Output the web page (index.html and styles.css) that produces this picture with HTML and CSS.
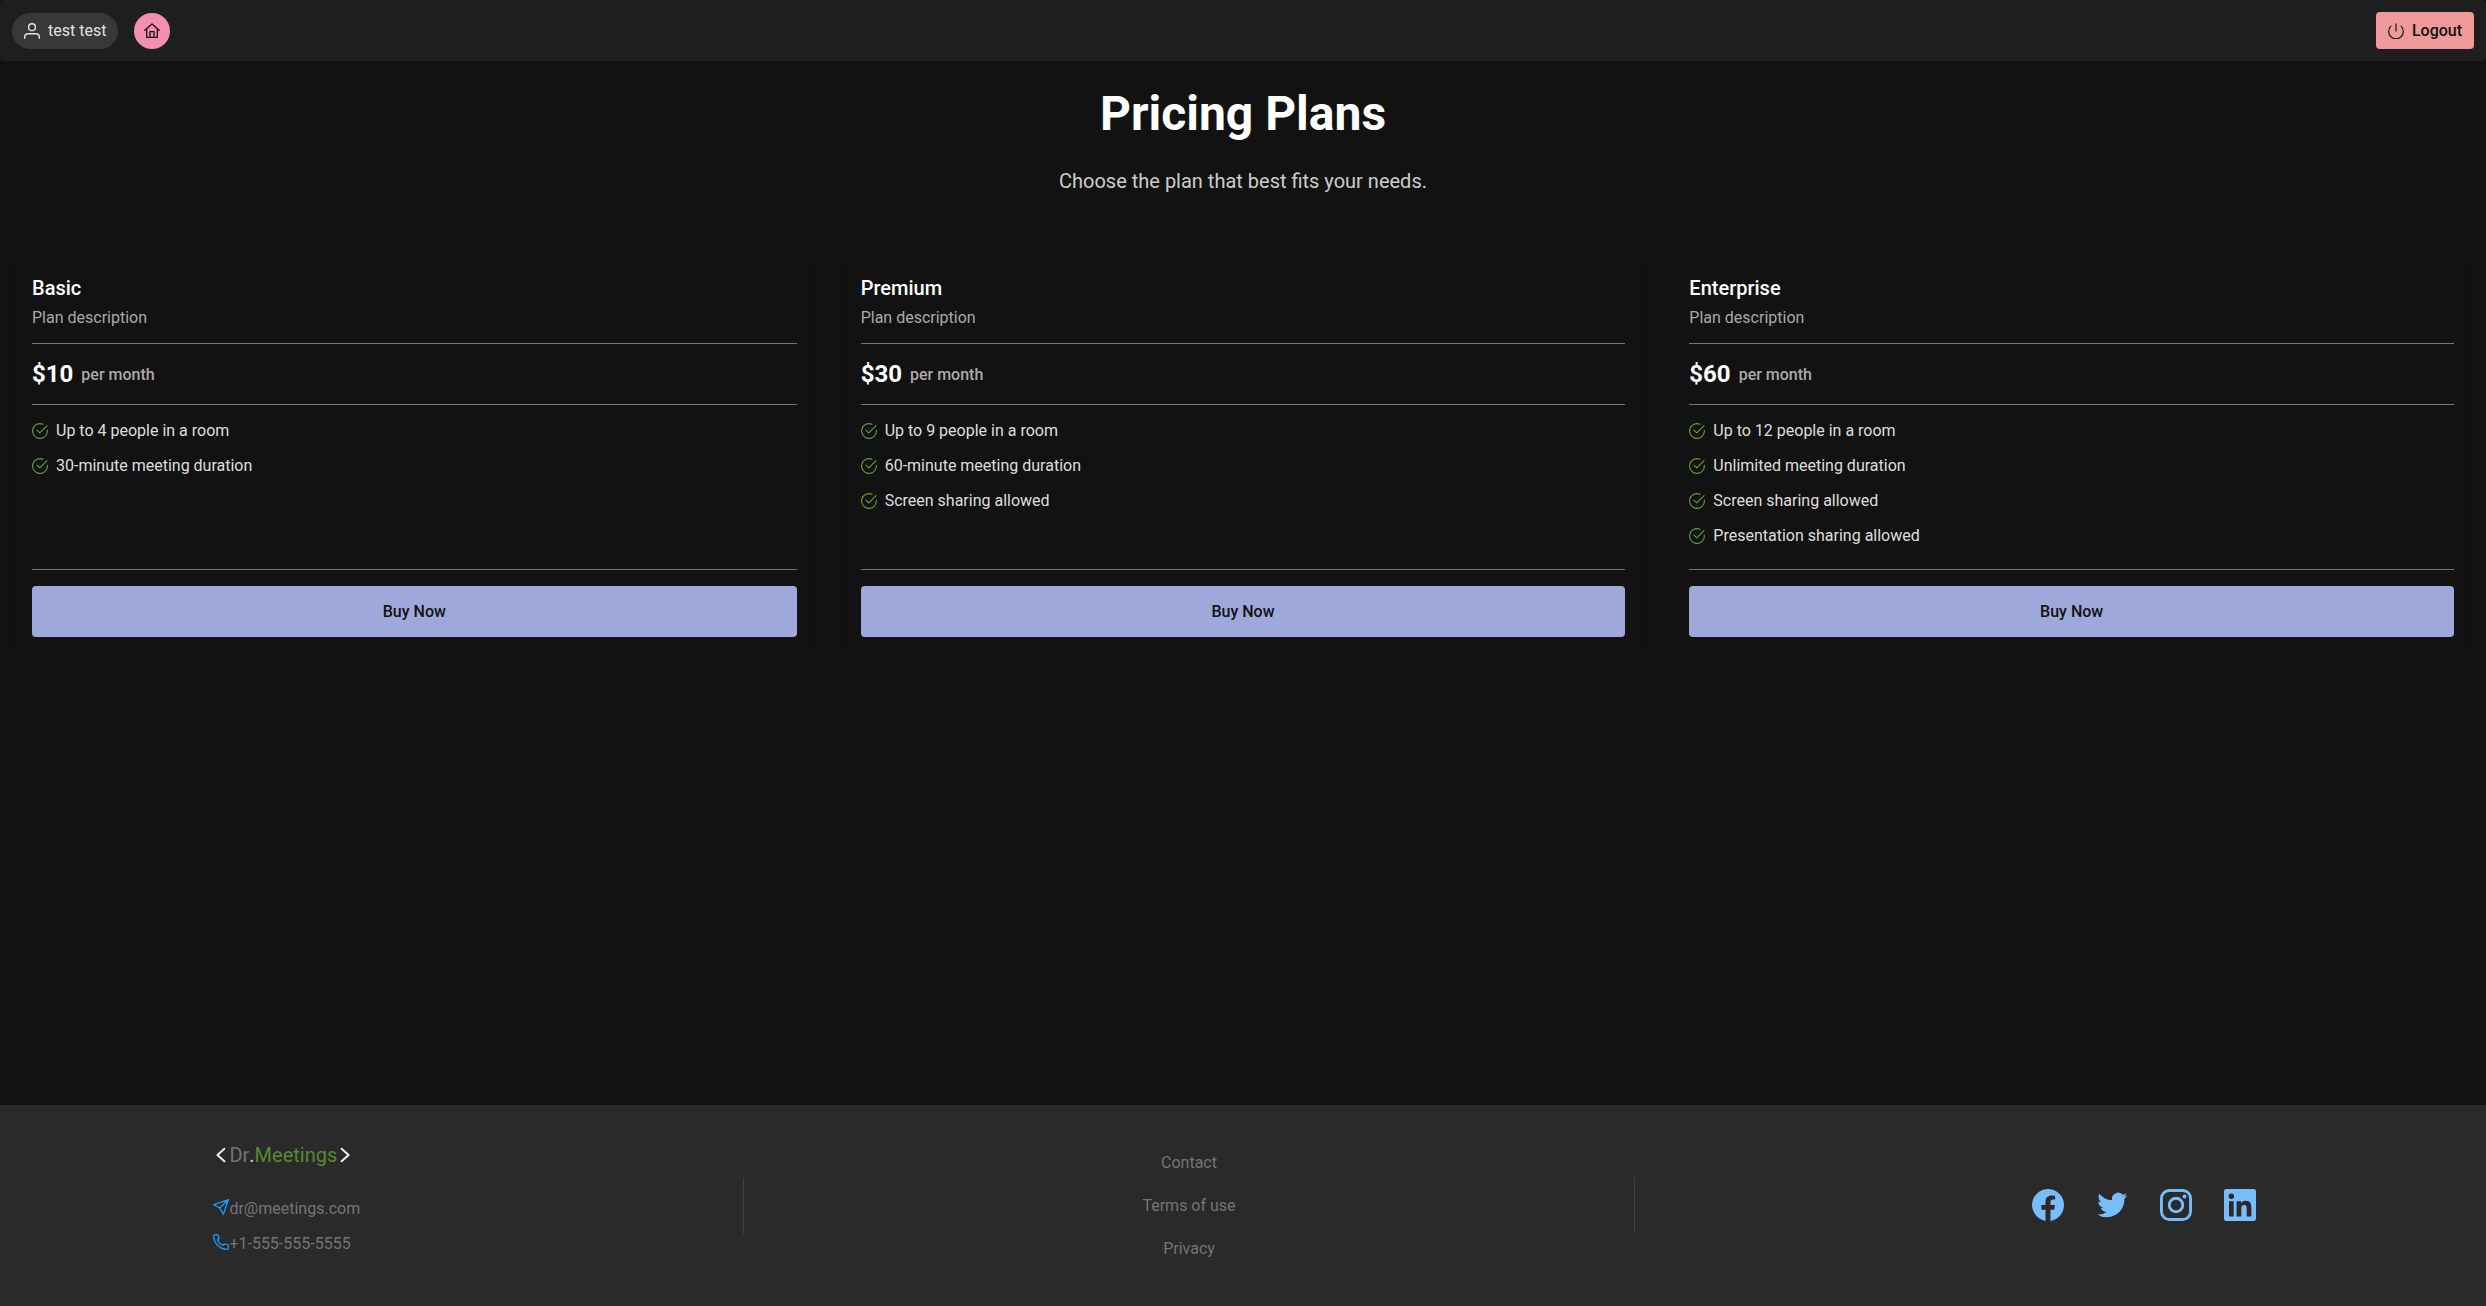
FILE: index.html
```html
<!DOCTYPE html>
<html lang="en">
<head>
<meta charset="utf-8">
<title>Pricing Plans</title>
<link rel="stylesheet" href="styles.css">
</head>
<body>
<svg class="sprite" aria-hidden="true">
  <symbol id="check" viewBox="0 0 16 16"><path d="M15.4 7.3V8A7.4 7.4 0 1 1 11 1.25M15 2.6 7.8 9.9 4.9 7.1" fill="none" stroke="currentColor" stroke-width="1.1" stroke-linecap="round" stroke-linejoin="round"/></symbol>
</svg>
<header class="topbar">
  <div class="chip">
    <svg class="icon" viewBox="0 0 16 16" fill="none" stroke="currentColor" stroke-width="1.4" stroke-linecap="round"><circle cx="8" cy="4.2" r="3.4"/><path d="M.7 15.2v-1c0-2.300 1.300-3.500 3.500-3.500h7.600c2.200 0 3.500 1.200 3.500 3.500v1"/></svg>
    <span>test test</span>
  </div>
  <a class="home" href="#" aria-label="Home">
    <svg class="icon" viewBox="0 0 16 16" fill="none" stroke="currentColor" stroke-width="1.3" stroke-linecap="round" stroke-linejoin="round"><path d="M.8 7.300 8 1l7.200 6.300M2.700 6v8.400h10.600V6M6 14.200V8.600h4v5.600"/></svg>
  </a>
  <button class="logout">
    <svg class="icon" viewBox="0 0 16 16" fill="none" stroke="currentColor" stroke-width="1.150" stroke-linecap="round"><path d="M8 .7v7.300M2.900 3.200a7.300 7.300 0 1 0 10.200 0"/></svg>
    <span>Logout</span>
  </button>
</header>
<main>
  <h1>Pricing Plans</h1>
  <p class="lead">Choose the plan that best fits your needs.</p>
  <div class="plans">
    <div class="col"><section class="card">
      <h2>Basic</h2>
      <p class="desc">Plan description</p>
      <hr>
      <div class="price"><strong>$10</strong><span>per month</span></div>
      <hr>
      <ul>
        <li><svg class="icon"><use href="#check"/></svg>Up to 4 people in a room</li>
        <li><svg class="icon"><use href="#check"/></svg>30-minute meeting duration</li>
      </ul>
      <hr class="last">
      <button class="buy">Buy Now</button>
    </section></div>
    <div class="col"><section class="card">
      <h2>Premium</h2>
      <p class="desc">Plan description</p>
      <hr>
      <div class="price"><strong>$30</strong><span>per month</span></div>
      <hr>
      <ul>
        <li><svg class="icon"><use href="#check"/></svg>Up to 9 people in a room</li>
        <li><svg class="icon"><use href="#check"/></svg>60-minute meeting duration</li>
        <li><svg class="icon"><use href="#check"/></svg>Screen sharing allowed</li>
      </ul>
      <hr class="last">
      <button class="buy">Buy Now</button>
    </section></div>
    <div class="col"><section class="card">
      <h2>Enterprise</h2>
      <p class="desc">Plan description</p>
      <hr>
      <div class="price"><strong>$60</strong><span>per month</span></div>
      <hr>
      <ul>
        <li><svg class="icon"><use href="#check"/></svg>Up to 12 people in a room</li>
        <li><svg class="icon"><use href="#check"/></svg>Unlimited meeting duration</li>
        <li><svg class="icon"><use href="#check"/></svg>Screen sharing allowed</li>
        <li><svg class="icon"><use href="#check"/></svg>Presentation sharing allowed</li>
      </ul>
      <hr class="last">
      <button class="buy">Buy Now</button>
    </section></div>
  </div>
</main>
<footer>
  <div class="brand">
    <div class="logo">
      <svg class="icon angle" viewBox="0 0 16 16"><path d="M11.400 1.700 4.400 8l7 6.300"/></svg><span class="dr">Dr</span><span class="dot">.</span><span class="name">Meetings</span><svg class="icon angle" viewBox="0 0 16 16"><path d="M4.600 1.700 11.600 8l-7 6.300"/></svg>
    </div>
    <div class="contact"><svg class="icon" viewBox="0 0 16 16"><path d="M15.400.7.700 5.600l6 3.400 3.700 6.300zM15.400.7 6.700 9"/></svg>dr@meetings.com</div>
    <div class="contact"><svg class="icon" viewBox="0 0 16 16"><path d="M.7 2.300C.7 1.200 1.500.6 2.400.6h1.500c.7 0 1.200.4 1.400 1l.6 2c.2.700 0 1.300-.5 1.700l-.9.8c.9 2.200 2.900 4.300 5.300 5.300l.9-.9c.4-.4 1-.6 1.600-.4l2 .6c.7.2 1.100.8 1.100 1.500v1.500c0 1-.8 1.700-1.700 1.700C6.900 15.400.7 9 .7 2.300z"/></svg>+1-555-555-5555</div>
  </div>
  <div class="divider"></div>
  <nav><a href="#">Contact</a><a href="#">Terms of use</a><a href="#">Privacy</a></nav>
  <div class="divider"></div>
  <div class="social">
    <svg viewBox="0 0 32 32"><path d="M32 16.100a16 16 0 1 0-18.500 15.800V20.700H9.400v-4.600h4.100v-3.500c0-4 2.400-6.200 6-6.200 1.800 0 3.600.3 3.600.3v3.900h-2c-2 0-2.600 1.300-2.600 2.500v3h4.400l-.7 4.600h-3.700v11.200A16 16 0 0 0 32 16.100z"/></svg>
    <svg viewBox="0 0 24 24"><path d="M23.640 4.940c-.85.380-1.740.630-2.680.740a4.680 4.680 0 0 0 2.050-2.580c-.9.530-1.900.920-2.960 1.130a4.660 4.660 0 0 0-7.950 4.250A13.240 13.240 0 0 1 2.490 3.600a4.660 4.660 0 0 0 1.440 6.230 4.640 4.640 0 0 1-2.110-.580v.060a4.660 4.660 0 0 0 3.740 4.570 4.700 4.700 0 0 1-2.100.080 4.670 4.670 0 0 0 4.350 3.240A9.360 9.360 0 0 1 .91 19.130 13.180 13.180 0 0 0 8.050 21.220c8.570 0 13.260-7.100 13.260-13.260l-.02-.600a9.470 9.470 0 0 0 2.350-2.420z"/></svg>
    <svg viewBox="0 0 32 32"><rect x="1.450" y="1.450" width="29.100" height="29.100" rx="8" fill="none" stroke="currentColor" stroke-width="2.900"/><circle cx="16" cy="16" r="6.750" fill="none" stroke="currentColor" stroke-width="2.900"/><circle cx="24.500" cy="7.500" r="2"/></svg>
    <svg viewBox="0 0 32 32"><path fill-rule="evenodd" d="M2.300 0h27.400A2.300 2.300 0 0 1 32 2.300v27.400a2.300 2.300 0 0 1-2.300 2.300H2.300A2.300 2.300 0 0 1 0 29.700V2.300A2.300 2.300 0 0 1 2.300 0zM5 12.200v15.300h4.700V12.200zM7.400 4.600a2.750 2.750 0 1 0 0 5.500 2.750 2.750 0 0 0 0-5.500zM12.600 12.200v15.300h4.700v-7.600c0-2 .4-3.900 2.900-3.900 2.400 0 2.500 2.300 2.500 4.100v7.400h4.700v-8.400c0-4.100-.9-7.300-5.700-7.300-2.300 0-3.900 1.300-4.500 2.500h-.1v-2.100z"/></svg>
  </div>
</footer>
</body>
</html>
```
FILE: styles.css
```css
* { box-sizing: border-box; }
body {
  margin: 0;
  min-height: 100vh;
  display: flex;
  flex-direction: column;
  background: #121212;
  color: rgba(255, 255, 255, .87);
  font: 16px Roboto, sans-serif;
}
h1, h2, p, ul { margin: 0; padding: 0; }
button { border: 0; font: 500 16px Roboto, sans-serif; color: #121212; }
.sprite { position: absolute; width: 0; height: 0; }
.icon { width: 16px; height: 16px; flex: none; }

.topbar {
  display: flex;
  align-items: center;
  height: 61px;
  padding: 0 12px;
  background: #1e1e1e;
  border-radius: 4px;
}
.chip {
  display: flex;
  align-items: center;
  gap: 8px;
  height: 36px;
  padding: 0 12px;
  border-radius: 18px;
  background: #383838;
}
.home {
  display: flex;
  align-items: center;
  justify-content: center;
  width: 36px;
  height: 36px;
  margin-left: 16px;
  border-radius: 50%;
  background: #f48fb1;
  color: #121212;
}
.logout {
  display: flex;
  align-items: center;
  gap: 8px;
  height: 37px;
  margin-left: auto;
  padding: 0 12px;
  border-radius: 4px;
  background: #ef9a9a;
}

main { flex: 1; text-align: center; }
h1 { padding-top: 25px; font-size: 48px; line-height: 56px; color: #fff; }
.lead { margin: 27px 0 51px; font-size: 20px; line-height: 24px; color: rgba(255, 255, 255, .8); }
.plans { display: grid; grid-template-columns: repeat(3, 1fr); text-align: left; }
.col { padding: 16px; }
.card {
  display: flex;
  flex-direction: column;
  height: 393px;
  padding: 16px;
  border-radius: 4px;
  box-shadow: 0 0 2px rgba(0, 0, 0, .08);
}
.card h2 { margin-bottom: 8px; font-size: 20px; font-weight: 500; line-height: 24px; color: #fff; }
.desc { line-height: 19px; color: #aaa; }
hr { width: 100%; height: 1px; margin: 16px 0; border: 0; background: #757575; }
.price { display: flex; align-items: center; height: 28px; }
.price strong { font-size: 24px; color: #fff; }
.price span { margin-left: 8px; font-weight: 500; color: #aaa; }
ul { flex: 1; list-style: none; }
li { display: flex; align-items: center; gap: 8px; height: 19px; margin-bottom: 16px; }
li .icon { color: #689f38; }
hr.last { margin-top: 0; }
.buy { height: 51px; border-radius: 4px; background: #9fa8da; }

footer {
  display: grid;
  grid-template-columns: 530px 1px 890px 1px 1fr;
  align-items: center;
  height: 201px;
  padding: 0 230px 0 213px;
  background: #2a2a2a;
  color: #757575;
}
.brand { padding: 0 0 15px .4px; }
.logo { display: flex; align-items: center; height: 24px; margin-bottom: 32px; font-size: 20px; }
.angle { fill: none; stroke: #e3f2fd; stroke-width: 2; stroke-linecap: round; stroke-linejoin: round; }
.dot { color: #c5cae9; }
.name { color: #558b2f; }
.contact { display: flex; height: 19px; line-height: 19px; }
.contact + .contact { margin-top: 16px; }
.contact .icon { fill: none; stroke: #2196f3; stroke-width: 1.4; stroke-linecap: round; stroke-linejoin: round; }
.divider { height: 56px; background: #404040; }
nav { display: flex; flex-direction: column; align-items: center; gap: 24px; }
nav a { color: inherit; text-decoration: none; line-height: 19px; }
.social { display: flex; justify-content: flex-end; gap: 32px; margin-bottom: 1px; color: #76bdf9; }
.social svg { width: 32px; height: 32px; fill: currentColor; }
```
